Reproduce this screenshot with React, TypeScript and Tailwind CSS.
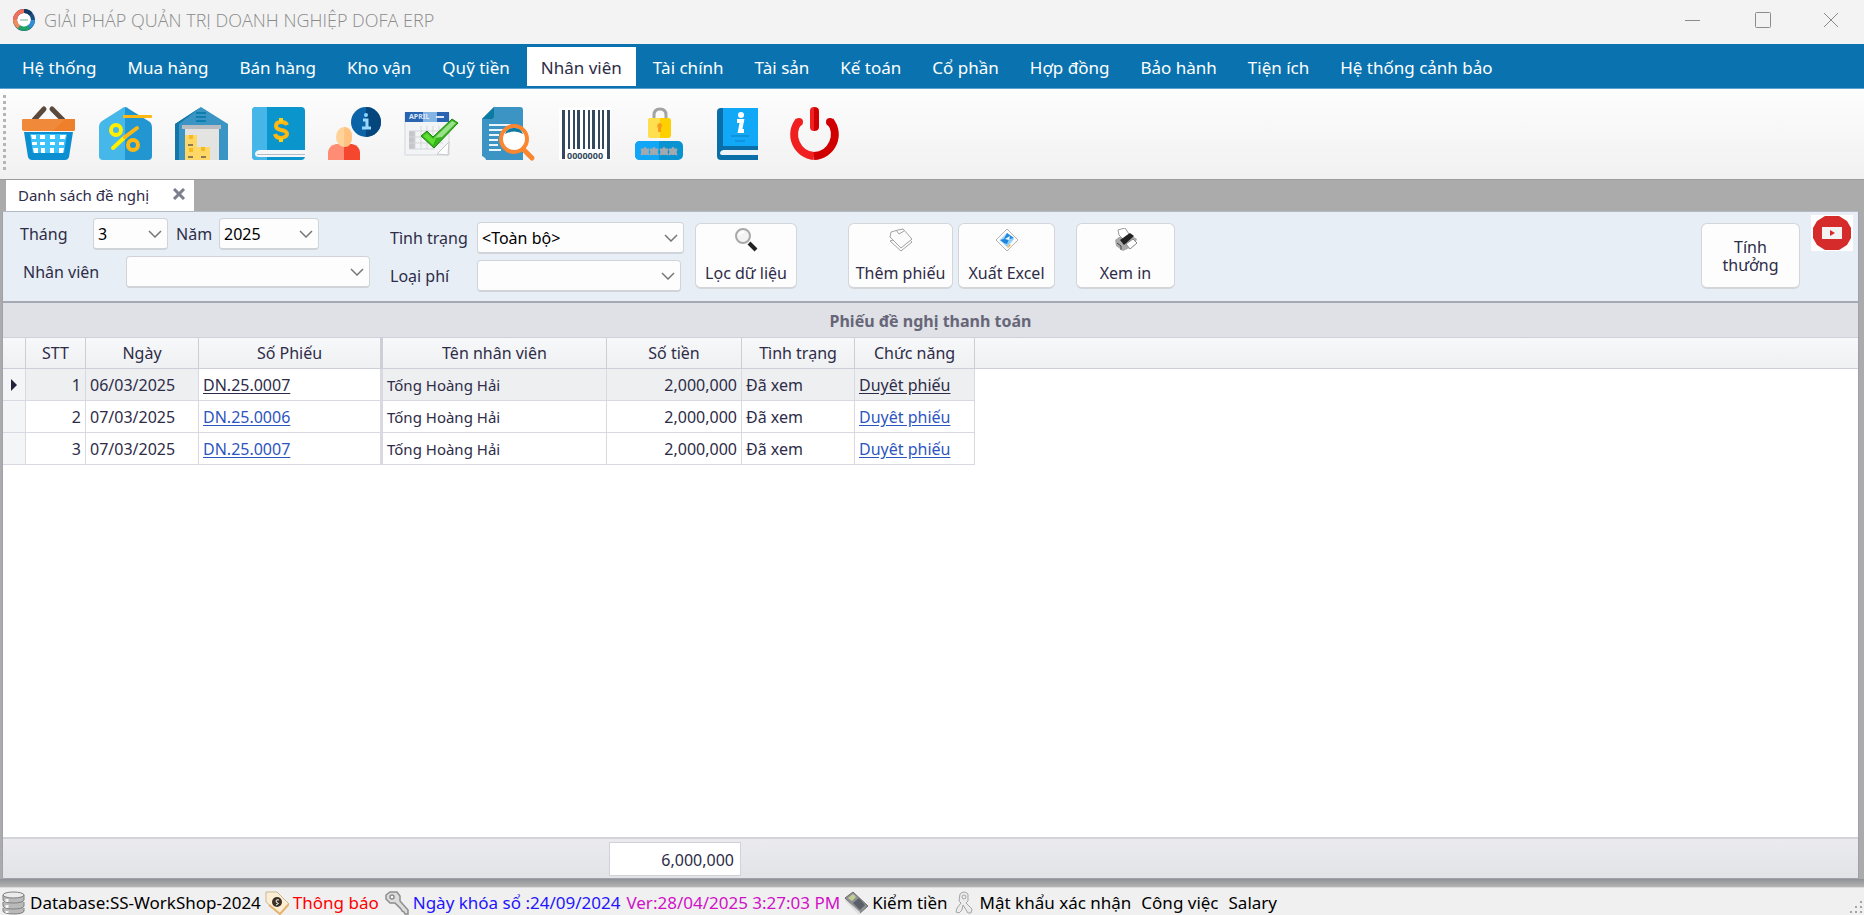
import React, { useState } from 'react';

interface Voucher {
  id: number;
  date: string;
  code: string;
  employee: string;
  amount: number;
  status: string;
}

interface SelectBoxProps {
  id: string;
  label: string;
  options: string[];
  labelClass?: string;
  className: string;
}

interface ActionButtonProps {
  className: string;
  icon?: React.ReactNode;
  children: React.ReactNode;
}

const MENUS = [
  'Hệ thống',
  'Mua hàng',
  'Bán hàng',
  'Kho vận',
  'Quỹ tiền',
  'Nhân viên',
  'Tài chính',
  'Tài sản',
  'Kế toán',
  'Cổ phần',
  'Hợp đồng',
  'Bảo hành',
  'Tiện ích',
  'Hệ thống cảnh bảo',
];

const VOUCHERS: Voucher[] = [
  { id: 1, date: '06/03/2025', code: 'DN.25.0007', employee: 'Tống Hoàng Hải', amount: 2000000, status: 'Đã xem' },
  { id: 2, date: '07/03/2025', code: 'DN.25.0006', employee: 'Tống Hoàng Hải', amount: 2000000, status: 'Đã xem' },
  { id: 3, date: '07/03/2025', code: 'DN.25.0007', employee: 'Tống Hoàng Hải', amount: 2000000, status: 'Đã xem' },
];

const formatAmount = (value: number) => value.toLocaleString('en-US');

const BARS = [4, 10, 15, 19, 25, 30, 34, 40, 44, 49];

const TOOLS: { name: string; icon: React.ReactNode }[] = [
  {
    name: 'Bán lẻ',
    icon: (
      <>
        <path d="M22 2 12 13M30 2l11 11" stroke="#5b4a3c" strokeWidth="5" strokeLinecap="round" />
        <path d="M2 25h49l-4 25q-1 3-4 3H10q-3 0-4-3z" fill="#0c8fd0" />
        <path d="M0 13q0-1 1-1h51q1 0 1 1v9q0 2-2 2H2q-2 0-2-2z" fill="#f08a3a" />
        <path d="M43 12h10v10q0 2-2 2H31z" fill="#ee7f2b" />
        <path d="M8 27h37l-3 19H11z" fill="#3cc3fb" />
        <g fill="#fff">
          <path d="M9 28h5v4h-4zM18 28h5v4h-5zM28 28h5v4h-5zM38 28h6l-1 4h-5zM10 35h5v3h-5zM18 35h5v3h-5zM28 35h5v3h-5zM37 35h5v3h-5zM11 41h5v5h-4zM19 41h4v5h-4zM28 41h4v5h-4zM37 41h5l-1 5h-4z" />
        </g>
      </>
    ),
  },
  {
    name: 'Khuyến mãi',
    icon: (
      <>
        <path d="M26 0Q28 0 30 2l21 13q2 2 2 5v29q0 4-4 4H26z" fill="#2196d1" />
        <path d="M26 0Q24 0 22 2L3 14q-3 2-3 6v29q0 4 4 4h22z" fill="#46b7e9" />
        <rect x="24" y="8" width="29" height="3" rx="1" fill="#fdb813" />
        <circle cx="17" cy="23" r="5" stroke="#fff000" strokeWidth="4" />
        <circle cx="34" cy="38" r="5" stroke="#fdb813" strokeWidth="4" />
        <path d="M14 41 26 30" stroke="#fff000" strokeWidth="4" strokeLinecap="round" />
        <path d="M26 30 38 21" stroke="#fdb813" strokeWidth="4" strokeLinecap="round" />
      </>
    ),
  },
  {
    name: 'Kho',
    icon: (
      <>
        <path d="M26 0 53 17v36H0V17z" fill="#3a95c4" />
        <path d="M26 0 0 17v36h4V17z" fill="#1177a8" />
        <path d="M21 5h10v2H21zM21 9h10v2H21zM21 13h10v2H21z" fill="#0d7fae" />
        <path d="M10 20h34v33H10z" fill="#e3e3e1" />
        <path d="M7 18h39v4H7z" fill="#b9bcc0" />
        <path d="M10 28h12v25H10zM22 40h13v13H22z" fill="#ffd766" />
        <path d="M14 28h4v4h-4zM14 41h4v4h-4zM26 40h4v4h-4z" fill="#f5b921" />
        <path d="M13 37h5v2h-5zM13 49h5v2h-5zM26 49h5v2h-5z" fill="#8a7b52" />
      </>
    ),
  },
  {
    name: 'Sổ quỹ',
    icon: (
      <>
        <rect width="53" height="53" rx="4" fill="#0b95cd" />
        <path d="M4 0h11v53H4q-4 0-4-4V4q0-4 4-4z" fill="#46b5e8" />
        <path d="M7 43h46v7H7q-4 0-4-3t4-4z" fill="#f4f6f8" />
        <path d="M5 47h48v1H5z" fill="#b3bcc4" />
        <path d="M35 18q-1-3-6-3-5 0-5 4 0 3 5 4 6 1 6 4t-6 4q-5 0-6-4" stroke="#fdb813" strokeWidth="4" />
        <path d="M29 11v4M29 31v4" stroke="#fdd013" strokeWidth="4" />
      </>
    ),
  },
  {
    name: 'Thông tin nhân viên',
    icon: (
      <>
        <path d="M16 37H8q-8 2-8 9v7h16z" fill="#ff8d76" />
        <path d="M16 37h8q8 2 8 9v7H16z" fill="#f4472d" />
        <ellipse cx="16" cy="30" rx="8" ry="10" fill="#ffd29a" />
        <path d="M16 20q8 0 8 10t-8 10z" fill="#ffc281" />
        <circle cx="38" cy="15" r="15" fill="#0c64a8" />
        <path d="M38 0a15 15 0 0 1 0 30z" fill="#05477c" />
        <circle cx="38" cy="8" r="2" fill="#8fd3ff" />
        <path d="M35 13h4v8h4M34 21h9" stroke="#9ad7ff" strokeWidth="3" />
      </>
    ),
  },
  {
    name: 'Lịch duyệt',
    icon: (
      <>
        <path d="M0 6h44v42H0z" fill="#f3f4f5" stroke="#d5d7da" />
        <path d="M0 5h44v10H0z" fill="#2a63b0" />
        <path d="M18 5h14v10H18z" fill="#84b4e4" />
        <text x="4" y="12" fontSize="7" fontWeight="bold" fill="#dbe8f8">APRIL</text>
        <path d="M31 9h8v2h-8z" fill="#dbe8f8" />
        <path d="M4 24h6v18H4z" fill="#c4c6c9" />
        <path d="M4 24h34M4 30h34M4 36h34M4 42h26M10 24v18M16 19v23M22 19v23M28 19v23M34 19v17" stroke="#d5d7da" />
        <path d="M32 47 44 35l-1 13z" fill="#fff" stroke="#c4c6c9" />
        <path d="m16 29 6-5 6 6L47 12l6 4-24 25z" fill="#35b51d" stroke="#23860f" />
        <path d="m29 31 18-17 4 2-14 14z" fill="#9be08a" />
        <path d="m18 29 4-3 6 6 4-3-4 9z" fill="#5fdc33" />
      </>
    ),
  },
  {
    name: 'Tra cứu chứng từ',
    icon: (
      <>
        <path d="M12 0h26q3 0 3 3v50H4q0-2-4-4V12z" fill="#3c94c4" />
        <path d="M12 0v9q0 3-3 3H0z" fill="#0c7ba3" />
        <path d="M7 18h22M7 23h14M7 28h10M7 33h9M7 38h9M7 43h12" stroke="#eaf4fa" strokeWidth="2" />
        <path d="m41 42 9 9" stroke="#fb8631" strokeWidth="5" strokeLinecap="round" />
        <circle cx="32" cy="32" r="13" fill="#fff" stroke="#fb8631" strokeWidth="4" />
        <path d="M23 27q3-7 10-6 6 0 8 6-8-5-18 0z" fill="#0c7ba3" />
      </>
    ),
  },
  {
    name: 'Mã vạch',
    icon: (
      <>
        <path d="M1 0h52v53H1z" fill="#fff" />
        {BARS.map((x, i) => (
          <rect key={x} x={x} y="3" width={i % 3 === 0 ? 3 : 2} height={i === 0 || i === 9 ? 49 : 39} fill="#34495e" />
        ))}
        <text x="9" y="52" fontSize="9" fontWeight="bold" fill="#34495e">0000000</text>
      </>
    ),
  },
  {
    name: 'Đổi mật khẩu',
    icon: (
      <>
        <path d="M19 13V8q0-6 6-6t6 6v5" stroke="#a3a3a3" strokeWidth="3" />
        <rect x="13" y="11" width="23" height="20" rx="3" fill="#ffd000" />
        <path d="M16 11h9v20h-9q-3 0-3-3V14q0-3 3-3z" fill="#ffdf4d" />
        <path d="M25 16a3 3 0 0 1 1 5v4h-3v-4a3 3 0 0 1 2-5z" fill="#f79a1d" />
        <rect y="34" width="48" height="19" rx="5" fill="#0a93d1" />
        <path d="M5 34h19v19H5q-5 0-5-5v-9q0-5 5-5z" fill="#12a6f7" />
        <g fill="#a4a9ae" stroke="#a4a9ae">
          {[10, 19, 29, 38].map((x) => (
            <path key={x} d={`M${x} 40l1 2 3 0-1 3 1 3-3-1-1 1-1-1-3 1 1-3-1-3 3 0z`} />
          ))}
        </g>
      </>
    ),
  },
  {
    name: 'Hướng dẫn',
    icon: (
      <>
        <path d="M10 1h37v52H10q-4 0-4-4V5q0-4 4-4z" fill="#0a6ea8" />
        <path d="M12 1h35v38H12z" fill="#12a8f8" />
        <path d="M12 43h35v5H12q-3 0-3-2t3-3z" fill="#eef3f7" />
        <circle cx="30" cy="8" r="3" fill="#fff" />
        <path d="M26 14h5l-2 10h4" stroke="#fff" strokeWidth="4" />
        <path d="M20 29h18M24 34h10" stroke="#0d7fc0" strokeWidth="1" />
      </>
    ),
  },
  {
    name: 'Thoát',
    icon: (
      <>
        <path d="M11 14A21.5 21.5 0 0 0 26 49" stroke="#f02020" strokeWidth="8" />
        <path d="M42 14A21.5 21.5 0 0 1 26 49" stroke="#d00000" strokeWidth="8" />
        <circle cx="11" cy="15" r="4" fill="#f02020" />
        <circle cx="42" cy="15" r="4" fill="#d00000" />
        <path d="M22 4q0-4 4-4v24q-4 0-4-4z" fill="#f02020" />
        <path d="M31 4q0-4-5-4v24q5 0 5-4z" fill="#d00000" />
      </>
    ),
  },
];

const SearchIcon = () => (
  <svg viewBox="0 0 24 24" className="size-6">
    <path d="m15 15 7 7" stroke="#222" strokeWidth="4" />
    <circle cx="9" cy="8" r="7" fill="#f3f3f3" stroke="#a9a9a9" strokeWidth="2" />
    <path d="M5 7q1-3 5-3" fill="none" stroke="#fff" strokeWidth="2" />
  </svg>
);

const PaperIcon = () => (
  <svg viewBox="0 0 24 24" className="size-6" fill="#fbfbfb" stroke="#a3a3a3">
    <path d="m1 13 11 10 11-9-6-6z" />
    <path d="m1 9 11 11 11-9-9-10-5 1-7 2z" />
    <path d="m7 2 3 4 5-3" fill="none" />
  </svg>
);

const ExportIcon = () => (
  <svg viewBox="0 0 24 24" className="size-6">
    <path d="m12 1 11 11-11 11L1 12z" fill="#fafafa" stroke="#b5b5b5" />
    <path d="m12 5 7 6-7 8-7-7z" fill="#8fd0fb" />
    <path d="m12 5 7 5-5 1-2 5-3-1-4-3 4-1z" fill="#1f86dd" />
    <path d="m10 11 5-3-1 4z" fill="#fff" />
    <path d="m12 19 3-3 1 1-3 3z" fill="#f5b54b" />
  </svg>
);

const PrintIcon = () => (
  <svg viewBox="0 0 24 24" className="size-6">
    <path d="m1 12 11-8 11 7-3 7-11 5-7-5z" fill="#a9a9a9" />
    <path d="M5 7 4 2l7-2 4 6-6 5z" fill="#fff" stroke="#999" />
    <path d="m6 12 10-7 4 3-10 9z" fill="#222" />
    <path d="m12 16 7-5 4 4-7 6z" fill="#fff" stroke="#888" />
    <path d="m3 15 4 3v4" fill="none" stroke="#444" />
  </svg>
);

const SelectBox: React.FC<SelectBoxProps> = ({ id, label, options, labelClass, className }) => (
  <>
    <label htmlFor={id} className={labelClass}>
      {label}
    </label>
    <div className={`relative h-8 ${className}`}>
      <select
        id={id}
        className="h-full w-full appearance-none rounded-sm border border-b-2 border-[#d0d4d8] bg-[#fdfdfd] px-1 pt-px text-black"
      >
        {options.map((option) => (
          <option key={option}>{option}</option>
        ))}
      </select>
      <svg viewBox="0 0 14 8" className="pointer-events-none absolute top-3 right-1.5 h-2 w-3.5">
        <path d="m1 1 6 6 6-6" fill="none" stroke="#777" strokeWidth="1.5" />
      </svg>
    </div>
  </>
);

const ActionButton: React.FC<ActionButtonProps> = ({ className, icon, children }) => (
  <button
    type="button"
    className={`flex h-[66px] flex-col items-center rounded-md border border-b-2 border-[#d3d5d8] bg-[#fdfdfd] leading-[18px] ${className}`}
  >
    {icon}
    {children}
  </button>
);

const TitleBar = () => (
  <header className="flex h-11 shrink-0 items-center bg-[#f3f3f3] pb-1 pl-3 text-[#8b8b8b]">
    <svg viewBox="0 0 24 24" className="mr-2 size-6" fill="none" strokeWidth="4">
      <circle cx="12" cy="12" r="9" fill="#fff" stroke="#1c4e80" />
      <path d="M3 12a9 9 0 0 1 9-9" stroke="#f27059" />
      <path d="M12 3a9 9 0 0 1 7 3" stroke="#123a63" />
      <path d="M21 12a9 9 0 0 1-4 7" stroke="#2d8fd5" />
      <path d="M17 19a9 9 0 0 1-10 0" stroke="#1fa467" />
      <path d="M7 19a9 9 0 0 1-4-7" stroke="#f08b5b" />
      <path d="M8 12h8" stroke="#b5d9c9" strokeWidth="2" />
    </svg>
    <h1 className="flex-1 font-['Open_Sans','Noto_Sans',sans-serif] text-[18px] font-light">GIẢI PHÁP QUẢN TRỊ DOANH NGHIỆP DOFA ERP</h1>
    <button type="button" aria-label="Thu nhỏ" className="flex w-[70px] justify-center">
      <svg viewBox="0 0 16 16" className="size-4" stroke="#8b8b8b"><path d="M0 8.5h15" /></svg>
    </button>
    <button type="button" aria-label="Phóng to" className="flex w-[70px] justify-center">
      <svg viewBox="0 0 16 16" className="size-4" fill="none" stroke="#8b8b8b"><rect x="0.5" y="0.5" width="15" height="15" rx="1" /></svg>
    </button>
    <button type="button" aria-label="Đóng" className="flex w-[66px] justify-center">
      <svg viewBox="0 0 16 16" className="size-4" stroke="#8b8b8b"><path d="m1 1 14 14M15 1 1 15" /></svg>
    </button>
  </header>
);

const StatusBar = () => (
  <footer className="flex h-7 shrink-0 items-center gap-1 overflow-hidden border-t border-[#dcdcdc] bg-[#f0f0f0] pt-0.5 pl-0.5 font-['Noto_Sans',sans-serif] text-[17px] whitespace-nowrap text-black">
    <svg viewBox="0 0 24 24" className="size-6 shrink-0" fill="#b9b9b9" stroke="#7f7f7f">
      <path d="M1 17v3c0 4 21 4 21 0v-3" />
      <path d="M1 11v4c0 4 21 4 21 0v-4" />
      <path d="M1 4v5c0 4 21 4 21 0V4" />
      <ellipse cx="11.5" cy="4" rx="10.5" ry="3" fill="#ececec" />
      <path d="M5 8v3M5 14v3M5 20v2" stroke="#f5f5f5" strokeWidth="3" />
    </svg>
    <span>Database:SS-WorkShop-2024</span>
    <svg viewBox="0 0 24 24" className="size-6 shrink-0">
      <path d="M1 1h11l12 12-9 10L1 11z" fill="#fdeed3" stroke="#c9b694" />
      <path d="m24 13-9 10L4 14" fill="none" stroke="#e3b36f" strokeWidth="2" />
      <circle cx="12" cy="11" r="5" fill="#3b3024" />
      <path d="M14 9q-3-1-3 1t2 2-2 2" fill="none" stroke="#fff" />
    </svg>
    <button type="button" className="text-[#ff0000]">Thông báo</button>
    <svg viewBox="0 0 24 24" className="ml-0.5 size-6 shrink-0" fill="#dcdcdc" stroke="#8d8d8d" strokeWidth="1.5">
      <path d="M5 1h7l3 4v5l8 9v4h-3l-1-2-2-1-1-2-6-6H5L1 8V4z" />
      <circle cx="7" cy="6" r="2" fill="#f8f8f8" />
    </svg>
    <span className="text-[#2415ff]">Ngày khóa sổ :24/09/2024</span>
    <span className="ml-0.5 text-[#d010c8]">Ver:28/04/2025 3:27:03 PM</span>
    <svg viewBox="0 0 24 24" className="size-6 shrink-0">
      <path d="M1 7 9 1l15 14-9 8z" fill="#8d9094" stroke="#6d6d6d" />
      <path d="m4 7 5-4 3 3-4 4z" fill="#c2cf94" />
      <path d="m9 12 6-5 6 7-5 5z" fill="#5b6068" />
      <path d="M1 8v2l13 13h2v-2" fill="#dedede" />
    </svg>
    <button type="button">Kiểm tiền</button>
    <svg viewBox="0 0 24 24" className="size-6 shrink-0" fill="#ececec" stroke="#a5a5a5">
      <path d="M8 3q4-4 8 0v7l-2 2 6 6-1 4h-3l-5-8-1 5-3 3-3-1 1-4 4-5-2-2z" />
      <circle cx="12" cy="6" r="2" />
    </svg>
    <button type="button">Mật khẩu xác nhận</button>
    <button type="button" className="ml-1.5">Công việc</button>
    <button type="button" className="ml-1.5">Salary</button>
    <svg viewBox="0 0 16 16" className="mt-auto ml-auto size-4 shrink-0" fill="#a3a3a3">
      <path d="M12 2h2v2h-2zM12 7h2v2h-2zM12 12h2v2h-2zM7 7h2v2H7zM7 12h2v2H7zM2 12h2v2H2z" />
    </svg>
  </footer>
);

const App: React.FC = () => {
  const [activeMenu, setActiveMenu] = useState('Nhân viên');
  const [selected, setSelected] = useState(1);

  const total = VOUCHERS.reduce((sum, v) => sum + v.amount, 0);

  return (
    <div className="flex h-screen flex-col overflow-hidden bg-[#ababab] font-['Noto_Sans',sans-serif] text-base text-[#2e2c48]">
      <TitleBar />

      <nav className="flex h-[45px] shrink-0 gap-[3px] border-b border-[#5aa2cf] bg-[#0a73af] pt-[3px] pl-2 text-[17px] text-white">
        {MENUS.map((menu) => (
          <button
            key={menu}
            type="button"
            onClick={() => setActiveMenu(menu)}
            className={`h-[39px] px-3.5 pt-0.5 whitespace-nowrap ${menu === activeMenu ? 'bg-white text-[#2e2c48]' : ''}`}
          >
            {menu}
          </button>
        ))}
      </nav>

      <div className="flex h-[90px] shrink-0 items-center bg-linear-to-b from-[#fdfdfd] to-[#f1f1f1] pb-0.5">
        <div className="ml-[3px] h-[76px] w-[3px] bg-[repeating-linear-gradient(#b5b5b5_0_3px,transparent_3px_6px)]" />
        <div className="ml-4 flex w-[819px] justify-between">
          {TOOLS.map((tool) => (
            <button key={tool.name} type="button" aria-label={tool.name} className="size-[53px]">
              <svg viewBox="0 0 53 53" className="size-full overflow-visible" fill="none">
                {tool.icon}
              </svg>
            </button>
          ))}
        </div>
      </div>

      <div className="flex h-8 shrink-0 border-t border-[#9b9b9b] pl-1.5">
        <div className="flex w-[188px] items-center justify-between bg-white pr-2 pl-3">
          <span className="text-[15px]">Danh sách đề nghị</span>
          <button type="button" aria-label="Đóng tab" className="mb-1">
            <svg viewBox="0 0 14 12" className="h-3 w-3.5" stroke="#7b7f8c" strokeWidth="3">
              <path d="m2 1 10 10M12 1 2 11" />
            </svg>
          </button>
        </div>
      </div>

      <main className="mr-[5px] ml-0.5 flex min-h-0 flex-1 flex-col border border-[#9fa1ae] border-t-[#b4bac4] bg-white">
        <form className="flex h-[91px] shrink-0 items-start border-b-2 border-[#a6a8b4] bg-[#e7eef5] pr-[5px] pl-[17px]">
          <div className="flex w-[350px] flex-col gap-1.5 pt-1.5">
            <div className="flex items-center">
              <SelectBox id="month" label="Tháng" options={['3', '4', '5']} labelClass="w-[73px]" className="w-[75px]" />
              <span className="w-2" />
              <SelectBox id="year" label="Năm" options={['2025', '2024']} labelClass="w-[43px]" className="w-[100px]" />
            </div>
            <div className="flex items-center">
              <SelectBox id="employee" label="Nhân viên" options={['', 'Tống Hoàng Hải']} labelClass="w-[106px] pl-[3px]" className="w-[244px]" />
            </div>
          </div>
          <div className="ml-5 flex w-[294px] flex-col gap-1.5 pt-2.5">
            <div className="flex items-center">
              <SelectBox id="status" label="Tình trạng" options={['<Toàn bộ>', 'Đã xem']} labelClass="w-[87px]" className="w-[207px]" />
            </div>
            <div className="flex items-center">
              <SelectBox id="fee" label="Loại phí" options={['', 'Công tác']} labelClass="w-[87px]" className="w-[204px]" />
            </div>
          </div>
          <div className="ml-[11px] flex flex-1 pt-[11px]">
            <ActionButton className="w-[102px] justify-between pt-1 pb-[5px]" icon={<SearchIcon />}>Lọc dữ liệu</ActionButton>
            <ActionButton className="ml-[51px] w-[105px] justify-between pt-1 pb-[5px]" icon={<PaperIcon />}>Thêm phiếu</ActionButton>
            <ActionButton className="ml-[5px] w-[97px] justify-between pt-1 pb-[5px]" icon={<ExportIcon />}>Xuất Excel</ActionButton>
            <ActionButton className="ml-[21px] w-[99px] justify-between pt-1 pb-[5px]" icon={<PrintIcon />}>Xem in</ActionButton>
            <ActionButton className="ml-auto w-[99px] justify-center px-5">Tính thưởng</ActionButton>
          </div>
          <a href="#video" aria-label="Video hướng dẫn" className="mt-[3px] ml-[11px] flex h-9 w-[42px] items-center justify-center bg-white">
            <svg viewBox="0 0 38 34" className="h-[34px] w-[38px]">
              <path d="M12 0h14l8 5 4 7v10l-4 7-8 5H12l-8-5-4-7V12l4-7z" fill="#d52b2b" />
              <path d="M9 11h20v12H9z" fill="#f3f3f3" />
              <path d="m17 14 5 3-5 3z" fill="#d52b2b" />
            </svg>
          </a>
        </form>

        <h2 className="flex h-[35px] shrink-0 items-center justify-center border-b border-[#cfd0d8] bg-[#e0e1e6] pt-0.5 font-bold text-[#666678]">
          Phiếu đề nghị thanh toán
        </h2>

        <div className="min-h-0 flex-1 overflow-auto">
          <table className="w-full table-fixed border-separate border-spacing-0 leading-5">
            <colgroup>
              <col className="w-[23px]" />
              <col className="w-[60px]" />
              <col className="w-[113px]" />
              <col className="w-[184px]" />
              <col className="w-[224px]" />
              <col className="w-[135px]" />
              <col className="w-[113px]" />
              <col className="w-[120px]" />
              <col />
            </colgroup>
            <thead className="bg-linear-to-b from-[#f7f8f9] to-[#eff0f2]">
              <tr className="h-[31px] *:border-r *:border-b *:border-[#cdced8] *:p-0 *:text-center *:font-normal">
                <th />
                <th>STT</th>
                <th>Ngày</th>
                <th className="border-r-3!">Số Phiếu</th>
                <th>Tên nhân viên</th>
                <th>Số tiền</th>
                <th>Tình trạng</th>
                <th>Chức năng</th>
                <th className="border-r-0!" />
              </tr>
            </thead>
            <tbody>
              {VOUCHERS.map((v) => {
                const active = v.id === selected;
                const link = active ? 'underline underline-offset-2 text-[#2e2c48]' : 'underline underline-offset-2 text-[#2d55c0]';
                return (
                  <tr
                    key={v.id}
                    onClick={() => setSelected(v.id)}
                    className={`h-8 *:border-r *:border-b *:border-[#d9dae1] *:px-1 *:py-0 ${active ? 'bg-[#edeff1]' : ''}`}
                  >
                    <td className="bg-[#f4f5f7]">
                      {active && (
                        <svg viewBox="0 0 6 12" className="mx-auto h-3 w-1.5" fill="#25233c">
                          <path d="m0 0 6 6-6 6z" />
                        </svg>
                      )}
                    </td>
                    <td className="text-right">{v.id}</td>
                    <td>{v.date}</td>
                    <td className="border-r-3! bg-white">
                      <a href="#phieu" className={link}>{v.code}</a>
                    </td>
                    <td className="text-[15px]">{v.employee}</td>
                    <td className="text-right">{formatAmount(v.amount)}</td>
                    <td>{v.status}</td>
                    <td>
                      <a href="#duyet" className={link}>Duyêt phiếu</a>
                    </td>
                    <td className="border-0! bg-white" />
                  </tr>
                );
              })}
            </tbody>
          </table>
        </div>

        <div className="flex h-[41px] shrink-0 items-center border-t-2 border-[#d3d4da] bg-linear-to-b from-[#ebebef] to-[#e2e3e7] pl-[606px]">
          <output className="flex h-[34px] w-[132px] items-center justify-end border border-[#d0d1d9] bg-white pt-0.5 pr-1.5">
            {formatAmount(total)}
          </output>
        </div>
      </main>

      <div className="h-2 shrink-0 bg-linear-to-b from-[#8f9193] to-[#b5b5b5]" />
      <StatusBar />
    </div>
  );
};

export default App;
